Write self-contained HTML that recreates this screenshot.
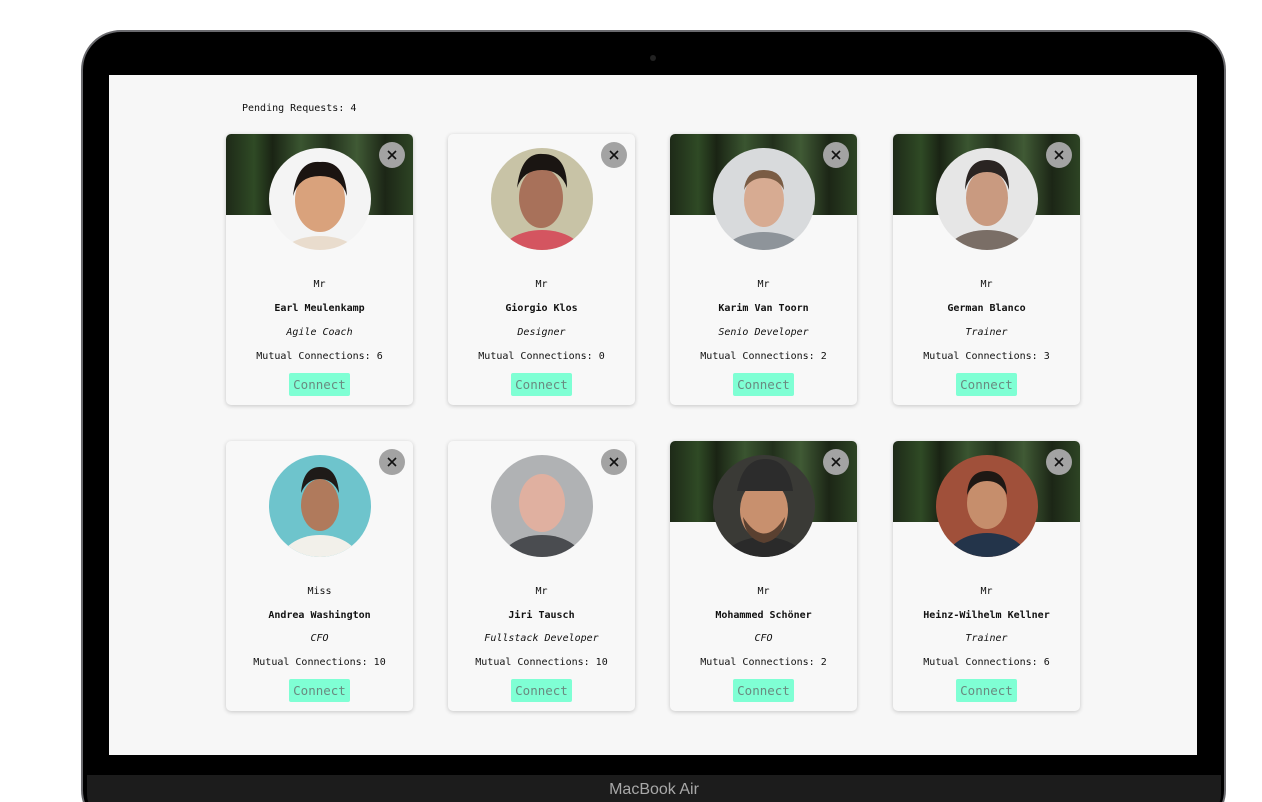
<!DOCTYPE html>
<html><head><meta charset="utf-8"><style>
*{margin:0;padding:0;box-sizing:border-box}
html,body{width:1262px;height:802px;overflow:hidden}
body{background:#fff;position:relative;font-family:"DejaVu Sans Mono","Liberation Mono",monospace}
.lap{position:absolute;left:81px;top:30px;width:1145px;height:800px;background:#000;border-radius:40px;border:2px solid #6a6a6e}
.bar{position:absolute;left:87px;top:775px;width:1134px;height:40px;background:#1c1c1c;border-radius:0 0 20px 20px;color:#a8a8a8;font-family:"Liberation Sans",sans-serif;font-size:16px;text-align:center;padding-top:6px}
.screen{position:absolute;left:109px;top:75px;width:1088px;height:680px;background:#f7f7f7}
.cam{position:absolute;left:650px;top:55px;width:6px;height:6px;border-radius:50%;background:#222}
.pend{position:absolute;left:242px;top:103px;font-size:10px;color:#111}
.card{position:absolute;width:187px;height:271px;background:#f8f8f8;border-radius:5px;box-shadow:0 1px 4px rgba(0,0,0,.2);overflow:hidden;text-align:center;font-size:10px;color:#111}
.ban{position:absolute;left:0;top:0;width:100%;height:81px;background:linear-gradient(90deg,#1e2a18,#2f4a25 15%,#1a2414 25%,#3a5530 40%,#22301c 55%,#405a35 70%,#1c2616 85%,#2d4424)}
.av{position:absolute;left:43px;top:14px;width:102px;height:102px;border-radius:50%;overflow:hidden}
.x{position:absolute;left:153px;top:8px;width:26px;height:26px;border-radius:50%;background:#a3a3a3}
.x svg{position:absolute;left:8px;top:8px}
.t{position:absolute;left:0;width:100%}
.btn{position:absolute;left:63px;top:239px;width:61px;height:23px;background:#7fffd4;border-radius:2px;color:#6a8a80;font-size:12.5px;line-height:23px}
</style></head><body>
<div class="lap"></div><div class="cam"></div>
<div class="bar">MacBook Air</div>
<div class="screen"></div>
<div class="pend">Pending Requests: 4</div>

<div class="card" style="left:226px;top:134px"><div class="ban"></div><div class="av"><svg width="102" height="102"><rect width="102" height="102" fill="#f4f4f4"/><ellipse cx="51" cy="110" rx="40" ry="22" fill="#e9dccd"/><ellipse cx="51" cy="52" rx="25" ry="32" fill="#d9a27c"/><path d="M24 48 Q28 12 51 14 Q76 12 78 48 Q72 28 51 28 Q30 28 24 48Z" fill="#1b1411"/></svg></div><div class="x"><svg width="10" height="10"><path d="M1 1L9 9M9 1L1 9" stroke="#111" stroke-width="1.6"/></svg></div>
<div class="t" style="top:145px">Mr</div><div class="t" style="top:169px;font-weight:bold">Earl Meulenkamp</div><div class="t" style="top:193px;font-style:italic">Agile Coach</div><div class="t" style="top:217px">Mutual Connections: 6</div><div class="btn">Connect</div></div>

<div class="card" style="left:448px;top:134px"><div class="av"><svg width="102" height="102"><rect width="102" height="102" fill="#c8c3a6"/><ellipse cx="51" cy="108" rx="42" ry="26" fill="#d45560"/><ellipse cx="50" cy="50" rx="22" ry="30" fill="#a8715a"/><path d="M26 40 Q30 4 52 6 Q76 6 76 40 Q70 22 51 22 Q32 22 26 40Z" fill="#1a1512"/></svg></div><div class="x"><svg width="10" height="10"><path d="M1 1L9 9M9 1L1 9" stroke="#111" stroke-width="1.6"/></svg></div>
<div class="t" style="top:145px">Mr</div><div class="t" style="top:169px;font-weight:bold">Giorgio Klos</div><div class="t" style="top:193px;font-style:italic">Designer</div><div class="t" style="top:217px">Mutual Connections: 0</div><div class="btn">Connect</div></div>

<div class="card" style="left:670px;top:134px"><div class="ban"></div><div class="av"><svg width="102" height="102"><rect width="102" height="102" fill="#d8dadc"/><ellipse cx="51" cy="108" rx="42" ry="24" fill="#8e949a"/><ellipse cx="51" cy="52" rx="20" ry="27" fill="#d7ab92"/><path d="M31 42 Q33 22 51 22 Q70 22 71 42 Q65 30 51 30 Q37 30 31 42Z" fill="#7a5c44"/></svg></div><div class="x"><svg width="10" height="10"><path d="M1 1L9 9M9 1L1 9" stroke="#111" stroke-width="1.6"/></svg></div>
<div class="t" style="top:145px">Mr</div><div class="t" style="top:169px;font-weight:bold">Karim Van Toorn</div><div class="t" style="top:193px;font-style:italic">Senio Developer</div><div class="t" style="top:217px">Mutual Connections: 2</div><div class="btn">Connect</div></div>

<div class="card" style="left:893px;top:134px"><div class="ban"></div><div class="av"><svg width="102" height="102"><rect width="102" height="102" fill="#e6e6e6"/><ellipse cx="51" cy="108" rx="42" ry="26" fill="#7a6e66"/><ellipse cx="51" cy="50" rx="21" ry="28" fill="#c99a80"/><path d="M29 42 Q30 12 51 12 Q73 12 73 42 Q68 24 51 24 Q34 24 29 42Z" fill="#2a2422"/></svg></div><div class="x"><svg width="10" height="10"><path d="M1 1L9 9M9 1L1 9" stroke="#111" stroke-width="1.6"/></svg></div>
<div class="t" style="top:145px">Mr</div><div class="t" style="top:169px;font-weight:bold">German Blanco</div><div class="t" style="top:193px;font-style:italic">Trainer</div><div class="t" style="top:217px">Mutual Connections: 3</div><div class="btn">Connect</div></div>

<div class="card" style="left:226px;top:441px;height:270px"><div class="av"><svg width="102" height="102"><rect width="102" height="102" fill="#6ec4cc"/><ellipse cx="51" cy="108" rx="40" ry="28" fill="#f2f0ea"/><ellipse cx="51" cy="50" rx="19" ry="26" fill="#b07a5c"/><path d="M32 38 Q34 12 51 12 Q68 12 70 38 Q64 24 51 24 Q38 24 32 38Z" fill="#1e1a18"/></svg></div><div class="x"><svg width="10" height="10"><path d="M1 1L9 9M9 1L1 9" stroke="#111" stroke-width="1.6"/></svg></div>
<div class="t" style="top:145px">Miss</div><div class="t" style="top:169px;font-weight:bold">Andrea Washington</div><div class="t" style="top:192px;font-style:italic">CFO</div><div class="t" style="top:216px">Mutual Connections: 10</div><div class="btn" style="top:238px">Connect</div></div>

<div class="card" style="left:448px;top:441px;height:270px"><div class="av"><svg width="102" height="102"><rect width="102" height="102" fill="#b0b2b4"/><ellipse cx="51" cy="108" rx="42" ry="28" fill="#4a4c50"/><ellipse cx="51" cy="48" rx="23" ry="29" fill="#e0b0a0"/></svg></div><div class="x"><svg width="10" height="10"><path d="M1 1L9 9M9 1L1 9" stroke="#111" stroke-width="1.6"/></svg></div>
<div class="t" style="top:145px">Mr</div><div class="t" style="top:169px;font-weight:bold">Jiri Tausch</div><div class="t" style="top:192px;font-style:italic">Fullstack Developer</div><div class="t" style="top:216px">Mutual Connections: 10</div><div class="btn" style="top:238px">Connect</div></div>

<div class="card" style="left:670px;top:441px;height:270px"><div class="ban"></div><div class="av"><svg width="102" height="102"><rect width="102" height="102" fill="#3a3a36"/><ellipse cx="51" cy="108" rx="42" ry="26" fill="#2a2a2a"/><ellipse cx="51" cy="55" rx="24" ry="30" fill="#c8906e"/><path d="M24 36 Q30 4 52 4 Q76 4 80 36Z" fill="#2c2c2c"/><path d="M30 62 Q51 95 72 62 Q70 84 51 88 Q32 84 30 62Z" fill="#5a4030"/></svg></div><div class="x"><svg width="10" height="10"><path d="M1 1L9 9M9 1L1 9" stroke="#111" stroke-width="1.6"/></svg></div>
<div class="t" style="top:145px">Mr</div><div class="t" style="top:169px;font-weight:bold">Mohammed Schöner</div><div class="t" style="top:192px;font-style:italic">CFO</div><div class="t" style="top:216px">Mutual Connections: 2</div><div class="btn" style="top:238px">Connect</div></div>

<div class="card" style="left:893px;top:441px;height:270px"><div class="ban"></div><div class="av"><svg width="102" height="102"><rect width="102" height="102" fill="#a0503a"/><ellipse cx="51" cy="108" rx="42" ry="30" fill="#23344a"/><ellipse cx="51" cy="48" rx="20" ry="26" fill="#c68e6c"/><path d="M31 40 Q32 16 51 16 Q70 16 71 40 Q65 26 51 26 Q37 26 31 40Z" fill="#1e1814"/></svg></div><div class="x"><svg width="10" height="10"><path d="M1 1L9 9M9 1L1 9" stroke="#111" stroke-width="1.6"/></svg></div>
<div class="t" style="top:145px">Mr</div><div class="t" style="top:169px;font-weight:bold">Heinz-Wilhelm Kellner</div><div class="t" style="top:192px;font-style:italic">Trainer</div><div class="t" style="top:216px">Mutual Connections: 6</div><div class="btn" style="top:238px">Connect</div></div>
</body></html>
